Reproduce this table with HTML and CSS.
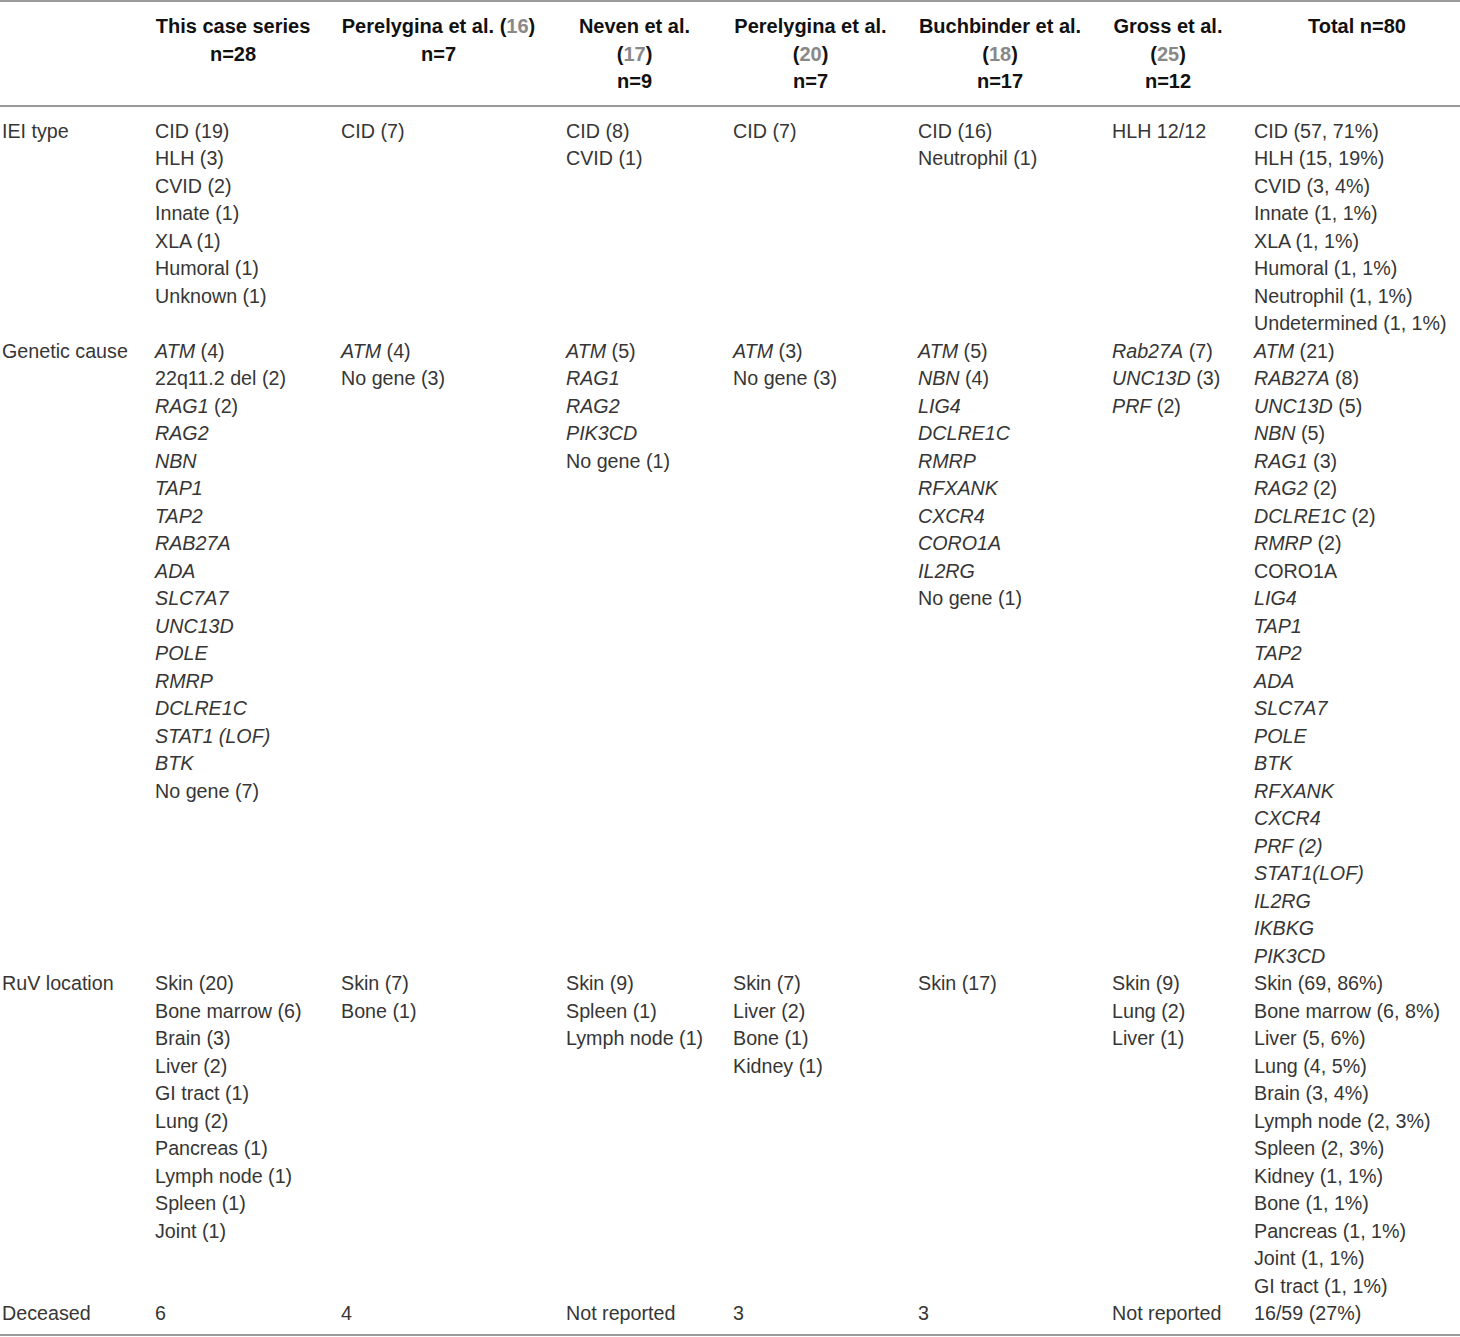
FILE: index.html
```html
<!DOCTYPE html>
<html lang="en">
<head>
  <meta charset="UTF-8" />
  <title>RuV in IEI patients</title>
  <link rel="stylesheet" href="styles.css">
</head>
<body>

<table class="summary">
  <colgroup>
    <col class="c0"><col class="c1"><col class="c2"><col class="c3"><col class="c4"><col class="c5"><col class="c6"><col class="c7">
  </colgroup>
  <thead>
    <tr>
      <th></th>
      <th>This case series<br>n=28</th>
      <th>Perelygina et al. (<span class="ref">16</span>)<br>n=7</th>
      <th>Neven et al.<br>(<span class="ref">17</span>)<br>n=9</th>
      <th>Perelygina et al.<br>(<span class="ref">20</span>)<br>n=7</th>
      <th>Buchbinder et al.<br>(<span class="ref">18</span>)<br>n=17</th>
      <th>Gross et al.<br>(<span class="ref">25</span>)<br>n=12</th>
      <th>Total n=80</th>
    </tr>
  </thead>
  <tbody>
    <tr class="first">
      <td>IEI type</td>
      <td>CID (19)<br>HLH (3)<br>CVID (2)<br>Innate (1)<br>XLA (1)<br>Humoral (1)<br>Unknown (1)</td>
      <td>CID (7)</td>
      <td>CID (8)<br>CVID (1)</td>
      <td>CID (7)</td>
      <td>CID (16)<br>Neutrophil (1)</td>
      <td>HLH 12/12</td>
      <td>CID (57, 71%)<br>HLH (15, 19%)<br>CVID (3, 4%)<br>Innate (1, 1%)<br>XLA (1, 1%)<br>Humoral (1, 1%)<br>Neutrophil (1, 1%)<br>Undetermined (1, 1%)</td>
    </tr>
    <tr>
      <td>Genetic cause</td>
      <td><i>ATM</i> (4)<br>22q11.2 del (2)<br><i>RAG1</i> (2)<br><i>RAG2</i><br><i>NBN</i><br><i>TAP1</i><br><i>TAP2</i><br><i>RAB27A</i><br><i>ADA</i><br><i>SLC7A7</i><br><i>UNC13D</i><br><i>POLE</i><br><i>RMRP</i><br><i>DCLRE1C</i><br><i>STAT1 (LOF)</i><br><i>BTK</i><br>No gene (7)</td>
      <td><i>ATM</i> (4)<br>No gene (3)</td>
      <td><i>ATM</i> (5)<br><i>RAG1</i><br><i>RAG2</i><br><i>PIK3CD</i><br>No gene (1)</td>
      <td><i>ATM</i> (3)<br>No gene (3)</td>
      <td><i>ATM</i> (5)<br><i>NBN</i> (4)<br><i>LIG4</i><br><i>DCLRE1C</i><br><i>RMRP</i><br><i>RFXANK</i><br><i>CXCR4</i><br><i>CORO1A</i><br><i>IL2RG</i><br>No gene (1)</td>
      <td><i>Rab27A</i> (7)<br><i>UNC13D</i> (3)<br><i>PRF</i> (2)</td>
      <td><i>ATM</i> (21)<br><i>RAB27A</i> (8)<br><i>UNC13D</i> (5)<br><i>NBN</i> (5)<br><i>RAG1</i> (3)<br><i>RAG2</i> (2)<br><i>DCLRE1C</i> (2)<br><i>RMRP</i> (2)<br>CORO1A<br><i>LIG4</i><br><i>TAP1</i><br><i>TAP2</i><br><i>ADA</i><br><i>SLC7A7</i><br><i>POLE</i><br><i>BTK</i><br><i>RFXANK</i><br><i>CXCR4</i><br><i>PRF (2)</i><br><i>STAT1(LOF)</i><br><i>IL2RG</i><br><i>IKBKG</i><br><i>PIK3CD</i></td>
    </tr>
    <tr>
      <td>RuV location</td>
      <td>Skin (20)<br>Bone marrow (6)<br>Brain (3)<br>Liver (2)<br>GI tract (1)<br>Lung (2)<br>Pancreas (1)<br>Lymph node (1)<br>Spleen (1)<br>Joint (1)</td>
      <td>Skin (7)<br>Bone (1)</td>
      <td>Skin (9)<br>Spleen (1)<br>Lymph node (1)</td>
      <td>Skin (7)<br>Liver (2)<br>Bone (1)<br>Kidney (1)</td>
      <td>Skin (17)</td>
      <td>Skin (9)<br>Lung (2)<br>Liver (1)</td>
      <td>Skin (69, 86%)<br>Bone marrow (6, 8%)<br>Liver (5, 6%)<br>Lung (4, 5%)<br>Brain (3, 4%)<br>Lymph node (2, 3%)<br>Spleen (2, 3%)<br>Kidney (1, 1%)<br>Bone (1, 1%)<br>Pancreas (1, 1%)<br>Joint (1, 1%)<br>GI tract (1, 1%)</td>
    </tr>
    <tr class="last">
      <td>Deceased</td>
      <td>6</td>
      <td>4</td>
      <td>Not reported</td>
      <td>3</td>
      <td>3</td>
      <td>Not reported</td>
      <td>16/59 (27%)</td>
    </tr>
  </tbody>
</table>

</body>
</html>
```

FILE: styles.css
```css
body {
  margin: 0;
  background: #fff;
  font-family: "Liberation Sans", Arial, sans-serif;
  color: #363636;
}
.summary {
  width: 1460px;
  table-layout: fixed;
  border-collapse: collapse;
  border-top: 2px solid #9a9a9a;
  border-bottom: 2px solid #9a9a9a;
  font-size: 19.7px;
  line-height: 27.5px;
}
.c0 { width: 153px; }
.c1 { width: 186px; }
.c2 { width: 225px; }
.c3 { width: 167px; }
.c4 { width: 185px; }
.c5 { width: 194px; }
.c6 { width: 142px; }
.c7 { width: 208px; }
.summary th,
.summary td {
  padding: 0 28px 0 2px;
  vertical-align: top;
  text-align: left;
  white-space: nowrap;
}
.summary th:last-child,
.summary td:last-child {
  padding-right: 0;
}
.summary thead th {
  padding-top: 11px;
  padding-bottom: 9px;
  text-align: center;
  font-weight: bold;
  font-size: 20px;
  color: #111;
  border-bottom: 2px solid #9a9a9a;
}
.ref {
  color: #888;
}
.summary tr.first td {
  padding-top: 11px;
}
.summary tr.last td {
  padding-bottom: 6px;
}
.summary i {
  font-style: italic;
}
```
